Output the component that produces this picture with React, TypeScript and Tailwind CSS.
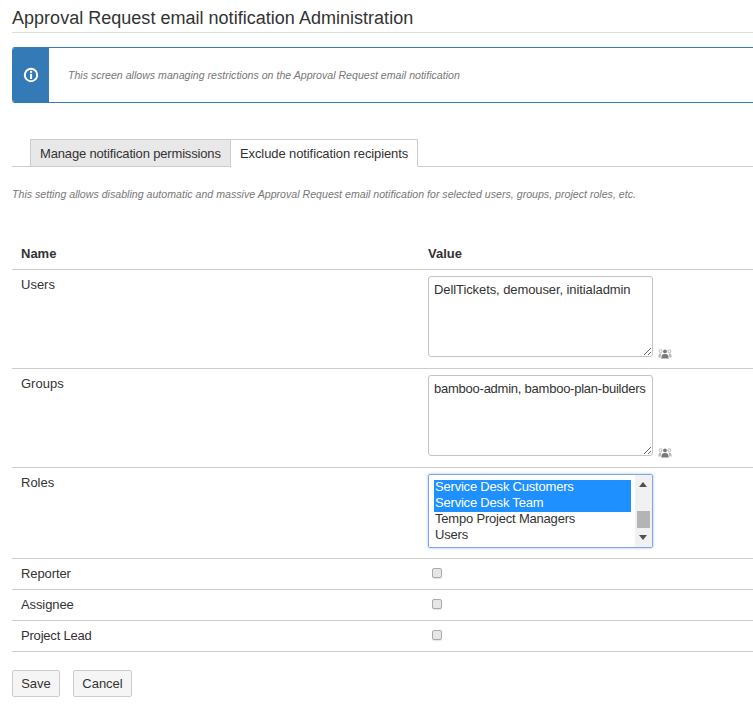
import React from 'react';

const GroupIcon = () => (
  <svg width="14" height="10" viewBox="0 0 14 10" className="ml-[5px] mb-[-2px] shrink-0" fill="#7a7a7a">
    <circle cx="7" cy="2.4" r="1.9" />
    <path d="M3.2 9.5 L3.8 6.4 Q4.4 5 7 5 Q9.6 5 10.2 6.4 L10.8 9.5 Z" />
    <circle cx="2.6" cy="2.2" r="1.5" fill="none" stroke="#aaa" strokeWidth="0.8" />
    <circle cx="11.4" cy="2.2" r="1.5" fill="none" stroke="#aaa" strokeWidth="0.8" />
    <path d="M0.3 8.5 L0.7 5.4 Q1.2 4.6 3.2 4.6 L2.6 8.5 Z" fill="#b8b8b8" />
    <path d="M13.7 8.5 L13.3 5.4 Q12.8 4.6 10.8 4.6 L11.4 8.5 Z" fill="#b8b8b8" />
  </svg>
);

const PickerField = ({ value, className }: { value: string; className: string }) => (
  <div className="flex items-end">
    <textarea
      readOnly
      value={value}
      className={`block w-[225px] h-[81px] border border-[#c4c4c4] rounded-[3px] pl-[5px] pr-0 py-[4px] text-[13px] leading-[18px] text-[#333] outline-none resize ${className}`}
    />
    <GroupIcon />
  </div>
);

const Row = ({ label, className, children }: { label: string; className: string; children: React.ReactNode }) => (
  <div className={`flex border-b border-[#ccc] ${className}`}>
    <div className="w-[416px] pl-[9px] shrink-0">{label}</div>
    <div>{children}</div>
  </div>
);

const CheckBox = () => (
  <div className="w-[10px] h-[10px] mt-[3px] ml-[4px] rounded-[2px] border border-[#aaa] bg-[#e6e6e6] shadow-[0_1px_1px_rgba(0,0,0,0.1)]" />
);

const roles = [
  { name: 'Service Desk Customers', selected: true },
  { name: 'Service Desk Team', selected: true },
  { name: 'Tempo Project Managers', selected: false },
  { name: 'Users', selected: false },
];

const App: React.FC = () => {
  return (
    <div className="w-[753px] h-[706px] overflow-hidden bg-white pl-3 text-[13px] leading-[18px] text-[#333] font-['Liberation_Sans',Arial,sans-serif]">
      <div className="w-[800px]">
        <h1 className="h-[33px] pt-[7px] border-b border-[#ddd] text-[18px] leading-[22px] font-normal tracking-[0.02px]">
          Approval Request email notification Administration
        </h1>

        <div className="flex h-[56px] mt-[14px] border-y border-[#337ab7] rounded-[3px]">
          <div className="flex w-[37px] items-center justify-center bg-[#337ab7] rounded-l-[3px]">
            <svg width="16" height="16" viewBox="0 0 16 16">
              <circle cx="8" cy="8" r="6.2" fill="none" stroke="#fff" strokeWidth="2" />
              <rect x="7" y="3.8" width="2.1" height="2" fill="#fff" />
              <rect x="7" y="6.8" width="2.1" height="5.2" fill="#fff" />
            </svg>
          </div>
          <p className="ml-[19px] self-center text-[10.6px] italic text-[#777]">
            This screen allows managing restrictions on the Approval Request email notification
          </p>
        </div>

        <div className="flex h-[28px] mt-[36px] pl-[18px] border-b border-[#ccc]">
          <div className="w-[201px] h-[28px] border border-[#ccc] bg-[#e8e8e8] pl-[9px] pt-[5px] tracking-[-0.16px]">
            Manage notification permissions
          </div>
          <div className="w-[187px] h-[28px] border border-l-0 border-[#ccc] border-b-white bg-white pl-[9px] pt-[5px] tracking-[-0.1px]">
            Exclude notification recipients
          </div>
        </div>

        <p className="mt-[18px] text-[10.6px] leading-[18px] italic text-[#777] tracking-[0.01px]">
          This setting allows disabling automatic and massive Approval Request email notification for selected users, groups, project roles, etc.
        </p>

        <div className="mt-[34px]">
          <Row label="Name" className="h-[33px] pt-[1px] font-bold items-center">
            Value
          </Row>
          <Row label="Users" className="h-[99px] pt-[6px]">
            <PickerField value="DellTickets, demouser, initialadmin" className="tracking-[-0.09px]" />
          </Row>
          <Row label="Groups" className="h-[99px] pt-[6px]">
            <PickerField value="bamboo-admin, bamboo-plan-builders" className="tracking-[-0.24px]" />
          </Row>
          <Row label="Roles" className="h-[91px] pt-[6px]">
            <div className="flex w-[225px] h-[74px] border border-[#7fa6e6] rounded-[2px] shadow-[0_0_3px_#9fbdf0] pl-[5px] pt-[5px]">
              <div className="w-[197px] text-[13px] leading-[14px] tracking-[-0.2px]">
                {roles.map((role) => (
                  <div
                    key={role.name}
                    className={role.selected ? 'h-[16px] pl-[1px] bg-[#1e90ff] text-white' : 'h-[16px] pl-[1px] text-[#333]'}
                  >
                    {role.name}
                  </div>
                ))}
              </div>
              <div className="relative w-[17px] h-[72px] ml-[4px] mt-[-5px] bg-[#f1f1f1]">
                <div className="absolute left-[4px] top-[7px] border-x-[4px] border-x-transparent border-b-[5px] border-b-[#505050]" />
                <div className="absolute left-[2px] top-[36px] w-[13px] h-[17px] bg-[#b4b4b4]" />
                <div className="absolute left-[4px] top-[60px] border-x-[4px] border-x-transparent border-t-[5px] border-t-[#505050]" />
              </div>
            </div>
          </Row>
          <Row label="Reporter" className="h-[31px] pt-[6px] tracking-[-0.1px]">
            <CheckBox />
          </Row>
          <Row label="Assignee" className="h-[31px] pt-[6px] tracking-[-0.1px]">
            <CheckBox />
          </Row>
          <Row label="Project Lead" className="h-[31px] pt-[6px] tracking-[-0.2px]">
            <CheckBox />
          </Row>
        </div>

        <div className="flex gap-[13px] mt-[18px]">
          <button className="w-[48px] h-[27px] border border-[#ccc] rounded-[2px] bg-[#f5f5f5] text-[#333]">Save</button>
          <button className="w-[59px] h-[27px] border border-[#ccc] rounded-[2px] bg-[#f5f5f5] text-[#333]">Cancel</button>
        </div>
      </div>
    </div>
  );
};

export default App;
